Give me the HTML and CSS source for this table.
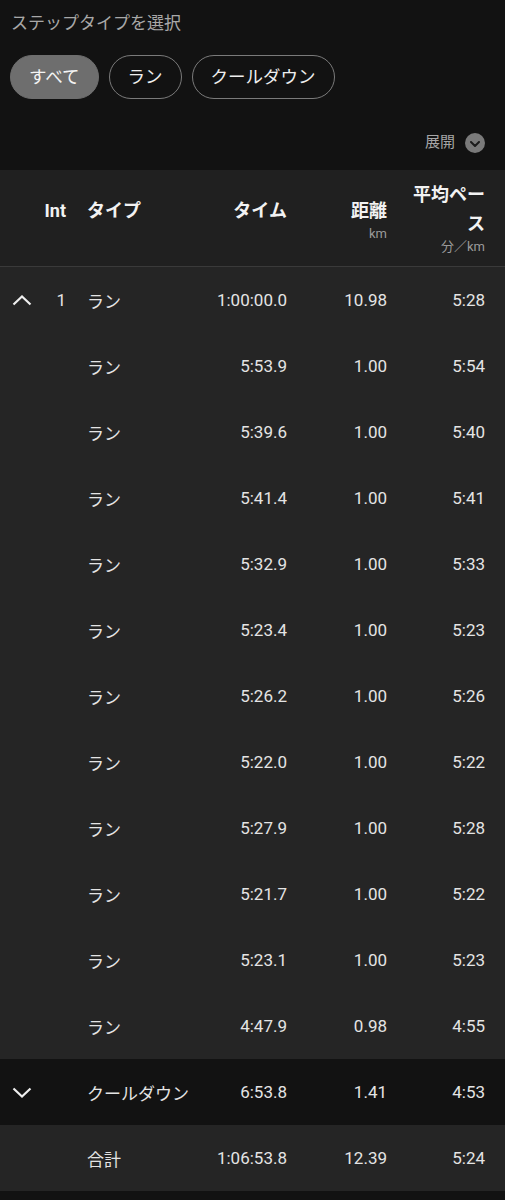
FILE: index.html
```html
<!DOCTYPE html>
<html lang="ja">
<head>
<meta charset="utf-8">
<title>ステップタイプを選択</title>
<link rel="stylesheet" href="styles.css">
</head>
<body>
<div class="top">
  <div class="title">ステップタイプを選択</div>
  <div class="chips">
    <span class="chip active">すべて</span>
    <span class="chip">ラン</span>
    <span class="chip">クールダウン</span>
  </div>
  <div class="expand">
    <span class="expand-label">展開</span>
    <span class="expand-icon"><svg width="10" height="6" viewBox="0 0 10 6"><polyline points="1,1 5,5 9,1" fill="none" stroke="#1c1c1c" stroke-width="2" stroke-linecap="round" stroke-linejoin="round"/></svg></span>
  </div>
</div>

<div class="table">
  <div class="row head">
    <div class="c chev"></div>
    <div class="c int h1">Int</div>
    <div class="c type h1">タイプ</div>
    <div class="c time h1">タイム</div>
    <div class="c dist h1">距離<span class="sub">km</span></div>
    <div class="c pace">平均ペース<span class="sub">分／km</span></div>
  </div>

  <div class="row">
    <div class="c chev"><svg width="20" height="11" viewBox="0 0 20 11"><polyline points="1.5,9.5 10,1.5 18.5,9.5" fill="none" stroke="#eeeeee" stroke-width="2.2"/></svg></div>
    <div class="c int">1</div>
    <div class="c type">ラン</div>
    <div class="c time">1:00:00.0</div>
    <div class="c dist">10.98</div>
    <div class="c pace">5:28</div>
  </div>
  <div class="row"><div class="c chev"></div><div class="c int"></div><div class="c type">ラン</div><div class="c time">5:53.9</div><div class="c dist">1.00</div><div class="c pace">5:54</div></div>
  <div class="row"><div class="c chev"></div><div class="c int"></div><div class="c type">ラン</div><div class="c time">5:39.6</div><div class="c dist">1.00</div><div class="c pace">5:40</div></div>
  <div class="row"><div class="c chev"></div><div class="c int"></div><div class="c type">ラン</div><div class="c time">5:41.4</div><div class="c dist">1.00</div><div class="c pace">5:41</div></div>
  <div class="row"><div class="c chev"></div><div class="c int"></div><div class="c type">ラン</div><div class="c time">5:32.9</div><div class="c dist">1.00</div><div class="c pace">5:33</div></div>
  <div class="row"><div class="c chev"></div><div class="c int"></div><div class="c type">ラン</div><div class="c time">5:23.4</div><div class="c dist">1.00</div><div class="c pace">5:23</div></div>
  <div class="row"><div class="c chev"></div><div class="c int"></div><div class="c type">ラン</div><div class="c time">5:26.2</div><div class="c dist">1.00</div><div class="c pace">5:26</div></div>
  <div class="row"><div class="c chev"></div><div class="c int"></div><div class="c type">ラン</div><div class="c time">5:22.0</div><div class="c dist">1.00</div><div class="c pace">5:22</div></div>
  <div class="row"><div class="c chev"></div><div class="c int"></div><div class="c type">ラン</div><div class="c time">5:27.9</div><div class="c dist">1.00</div><div class="c pace">5:28</div></div>
  <div class="row"><div class="c chev"></div><div class="c int"></div><div class="c type">ラン</div><div class="c time">5:21.7</div><div class="c dist">1.00</div><div class="c pace">5:22</div></div>
  <div class="row"><div class="c chev"></div><div class="c int"></div><div class="c type">ラン</div><div class="c time">5:23.1</div><div class="c dist">1.00</div><div class="c pace">5:23</div></div>
  <div class="row"><div class="c chev"></div><div class="c int"></div><div class="c type">ラン</div><div class="c time">4:47.9</div><div class="c dist">0.98</div><div class="c pace">4:55</div></div>

  <div class="row dark">
    <div class="c chev"><svg width="20" height="11" viewBox="0 0 20 11"><polyline points="1.5,1.5 10,9.5 18.5,1.5" fill="none" stroke="#eeeeee" stroke-width="2.2"/></svg></div>
    <div class="c int"></div>
    <div class="c type">クールダウン</div>
    <div class="c time">6:53.8</div>
    <div class="c dist">1.41</div>
    <div class="c pace">4:53</div>
  </div>
  <div class="row">
    <div class="c chev"></div>
    <div class="c int"></div>
    <div class="c type">合計</div>
    <div class="c time">1:06:53.8</div>
    <div class="c dist">12.39</div>
    <div class="c pace">5:24</div>
  </div>
</div>
</body>
</html>
```

FILE: styles.css
```css
html, body {
  margin: 0;
  padding: 0;
  background: #121212;
}
body {
  font-family: Roboto, "Noto Sans CJK JP", sans-serif;
  color: #e2e2e2;
  width: 505px;
}
.top {
  padding: 11px 20px 17px 10px;
}
.title {
  font-size: 17px;
  line-height: 24px;
  color: #a8a8a8;
  padding-left: 1px;
}
.chips {
  display: flex;
  gap: 10px;
  margin-top: 20px;
}
.chip {
  display: inline-block;
  height: 42px;
  line-height: 42px;
  padding: 0 18px;
  border: 1px solid #7a7a7a;
  border-radius: 22px;
  font-size: 17.5px;
  color: #eeeeee;
}
.chip.active {
  background: #6e6e6e;
  border-color: #6e6e6e;
  color: #f4f4f4;
}
.expand {
  margin-top: 34px;
  height: 20px;
  display: flex;
  justify-content: flex-end;
  align-items: center;
  gap: 10px;
}
.expand-label {
  font-size: 15px;
  line-height: 20px;
  color: #a6a6a6;
  margin-top: -3px;
}
.expand-icon {
  width: 20px;
  height: 20px;
  border-radius: 50%;
  background: #7a7a7a;
  display: flex;
  align-items: center;
  justify-content: center;
}
.expand-icon svg {
  display: block;
  margin-top: 1px;
}

.table {
  background: #252525;
}
.row {
  display: grid;
  grid-template-columns: 44px 22px minmax(0, 1fr) 110px 100px 98px;
  padding-right: 20px;
  height: 66px;
  align-items: center;
  font-size: 17px;
  color: #e4e4e4;
}
.row.dark {
  background: #121212;
}
.c {
  white-space: nowrap;
}
.chev {
  display: flex;
  justify-content: center;
}
.chev svg {
  display: block;
}
.int {
  text-align: right;
}
.type {
  padding-left: 21px;
}
.time, .dist, .pace {
  text-align: right;
}
.row.head {
  border-bottom: 1px solid #3a3a3a;
  background: #202020;
  align-items: start;
  padding-top: 10px;
  box-sizing: border-box;
  height: 97px;
  font-size: 18px;
  font-weight: bold;
  color: #f2f2f2;
}
.row.head .c {
  line-height: 29px;
}
.row.head .h1 {
  margin-top: 16px;
}
.row.head .pace {
  white-space: normal;
  padding-left: 25px;
  line-break: normal;
}
.sub {
  display: block;
  font-size: 13px;
  line-height: 17px;
  font-weight: normal;
  color: #9a9a9a;
}
```
